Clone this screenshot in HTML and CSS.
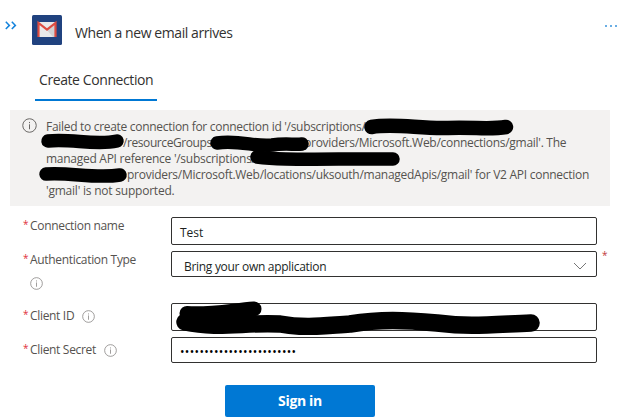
FILE: index.html
```html
<!DOCTYPE html>
<html lang="en">
<head>
<meta charset="utf-8">
<title>When a new email arrives</title>
<link rel="stylesheet" href="styles.css">
</head>
<body>
<svg class="defs" width="0" height="0" aria-hidden="true">
  <symbol id="info" viewBox="0 0 16 16">
    <circle cx="8" cy="8" r="7.2" fill="none" stroke="currentColor"/>
    <path d="M8 6.7V12M8 4.2v1.3" fill="none" stroke="currentColor"/>
  </symbol>
</svg>
<main class="card">
  <header class="header">
    <svg class="expand" viewBox="0 0 12 9"><path d="M.8.8 4.4 4.4.8 8M6.8.8l3.6 3.6L6.8 8" fill="none" stroke="#1483dc" stroke-width="1.5"/></svg>
    <svg class="logo" viewBox="0 0 30 30">
      <rect width="30" height="30" rx="1.5" fill="#20427f"/>
      <path d="M6 7h18v15H6z" fill="#e9e9e9"/>
      <path d="M15 15l9-7v14h-3z" fill="#d2d2d4"/>
      <path d="M6.5 22V8L15 14.5 23.5 8v14" fill="none" stroke="#dc4b40" stroke-width="2.2"/>
    </svg>
    <h1 class="title">When a new email arrives</h1>
    <span class="more"><i></i><i></i><i></i></span>
  </header>
  <nav class="tabs"><span class="tab">Create Connection</span></nav>
  <section class="message">
    <svg class="message-icon"><use href="#info"/></svg>
    <div class="message-text">
      <p><span class="t1">Failed to create connection for connection id '/subscriptions/</span></p>
      <p><span class="gap-a"></span><span class="t2">/resourceGroups</span><span class="t3">providers/Microsoft.Web/connections/gmail'. The</span></p>
      <p><span class="t4">managed API reference '/subscriptions/</span></p>
      <p><span class="gap-b"></span><span class="t5">providers/Microsoft.Web/locations/uksouth/managedApis/gmail' for V2 API connection</span></p>
      <p><span class="t6">'gmail' is not supported.</span></p>
    </div>
    <svg class="marks" viewBox="0 0 600 96">
      <path d="M361.5 17C385 13 410 19 438 18C465 17 480 20 496 17" stroke-width="14.5"/>
      <path d="M38 31C60 28 85 36 107 31" stroke-width="13.5"/>
      <path d="M207 33C230 30 245 37 262 35C275 33 285 35 292 34" stroke-width="13.5"/>
      <path d="M247 47C268 50 290 49 383 49" stroke-width="13.5"/>
      <path d="M36 64C60 62 85 69 110 65" stroke-width="13.5"/>
    </svg>
  </section>
  <form class="form">
    <div class="row name">
      <label><b>*</b><span>Connection name</span></label>
      <div class="field"><span class="v1">Test</span></div>
    </div>
    <div class="row auth">
      <label><b>*</b><span>Authentication Type</span><svg class="info"><use href="#info"/></svg></label>
      <div class="field select"><span class="v2">Bring your own application</span><svg class="chevron" viewBox="0 0 14 8"><path d="M1 1l6 6 6-6" fill="none" stroke="#777"/></svg></div>
      <b class="required">*</b>
    </div>
    <div class="row client">
      <label><b>*</b><span>Client ID</span><svg class="info"><use href="#info"/></svg></label>
      <div class="field">
        <svg class="id-mark" viewBox="0 0 370 36"><path d="M17 14.5C40 16 60 12 84 10" stroke-width="15"/><path d="M15 23C48 30 76 23 110 25C136 30 160 26 180 25C210 20 235 21 267 24C300 28 315 26 361 24" stroke-width="17.5"/></svg>
      </div>
    </div>
    <div class="row secret">
      <label><b>*</b><span>Client Secret</span><svg class="info"><use href="#info"/></svg></label>
      <div class="field"><span class="dots">••••••••••••••••••••••••</span></div>
    </div>
    <button type="button" class="signin">Sign in</button>
  </form>
</main>
</body>
</html>
```
FILE: styles.css
```css
* { box-sizing: border-box; }
body {
  margin: 0;
  background: #fff;
  color: #323130;
  font: 12px/16px "Open Sans", "Noto Sans", sans-serif;
}
.defs { position: absolute; }
.card { width: 620px; height: 419px; overflow: hidden; }
span { white-space: nowrap; }
svg { flex: none; }

.header { display: flex; align-items: flex-start; height: 65px; padding: 15px 3px 0 5px; }
.expand { width: 12px; height: 9px; margin: 6px 15px 0 0; }
.logo { width: 30px; height: 30px; margin-right: 13px; }
.title { margin: 8px 0 0; font-size: 14px; line-height: 20px; font-weight: 400; letter-spacing: -.42px; }
.more { display: flex; gap: 3px; margin: 10px 0 0 auto; }
.more i { width: 2px; height: 2px; background: #6aaee4; }

.tabs { display: flex; height: 45px; padding-left: 35px; }
.tab { width: 122px; height: 36px; padding: 5px 4px; border-bottom: 2px solid #0078d4; font-size: 14px; line-height: 20px; letter-spacing: -.41px; }

.message { position: relative; display: flex; width: 600px; height: 96px; margin-left: 10px; padding: 9px 0 0 12px; background: #f3f2f1; color: #55524f; }
.message-icon { width: 15px; height: 15px; margin: -1px 9px 0 0; color: #605e5c; }
.message-text p { display: flex; height: 16px; margin: 0; }
.gap-a { width: 77px; }
.gap-b { width: 81px; }
.t1 { letter-spacing: -.3px; }
.t2 { width: 181px; letter-spacing: -.42px; }
.t3 { letter-spacing: -.28px; }
.t4 { letter-spacing: -.27px; }
.t5 { letter-spacing: -.27px; }
.t6 { letter-spacing: -.22px; }
.marks { position: absolute; inset: 0; width: 600px; height: 96px; }
.marks path, .id-mark path { fill: none; stroke: #000; stroke-linecap: round; stroke-linejoin: round; }

.form { display: flex; flex-direction: column; padding: 11px 0 0 23px; color: #55524f; }
.row { display: flex; align-items: flex-start; }
.row label { display: flex; flex-wrap: wrap; align-content: flex-start; width: 148px; padding-top: 1px; letter-spacing: -.32px; }
.row b { width: 7px; color: #e0303c; font-size: 10px; font-weight: 400; line-height: 13px; }
.name { height: 34px; }
.auth { height: 52px; }
.client { height: 34px; }
.secret { height: 48px; }
.field { display: flex; width: 426px; height: 28px; border: 1px solid #323130; border-radius: 2px; padding: 7px 9px 0 8px; color: #201f1e; }
.auth .field, .secret .field { height: 26px; }
.select { justify-content: space-between; }
.auth .select { padding-left: 12px; }
.v2 { letter-spacing: -.3px; }
.chevron { width: 14px; height: 8px; margin-top: 3px; }
.info { width: 13px; height: 13px; margin: 2px 0 0 8px; color: #8a8886; }
.auth .info { margin: 9px 60px 0 7px; }
.row .required { margin: -2px 0 0 5px; color: #c0393c; }
.client label, .secret label { padding-top: 5px; }
.client .field { position: relative; }
.id-mark { position: absolute; left: -2px; top: -5px; width: 370px; height: 36px; }
.secret .field { padding-top: 6px; }
.dots { font-size: 12px; letter-spacing: .34px; color: #000; }
.signin { width: 150px; height: 32px; margin-left: 202px; padding: 0; border: 0; border-radius: 2px; background: #0078d4; color: #fff; font: 700 14px/32px "Open Sans", "Noto Sans", sans-serif; letter-spacing: -.35px; }
```
